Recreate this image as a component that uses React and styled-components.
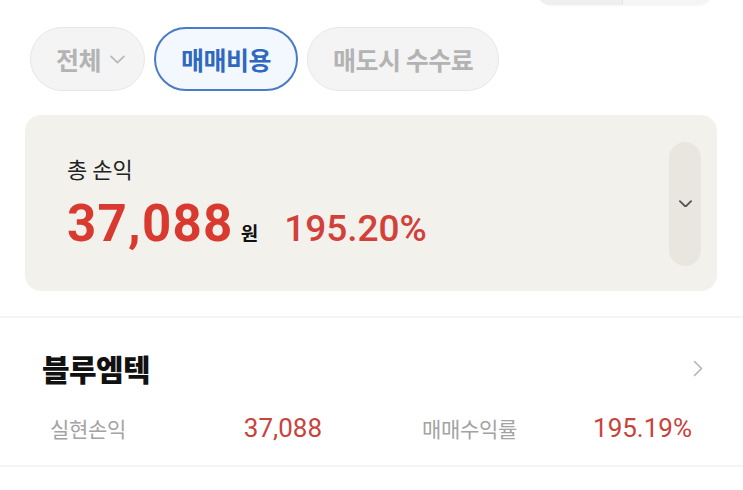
import React from 'react';
import styled, { createGlobalStyle } from 'styled-components';

const GlobalStyle = createGlobalStyle`
  body {
    margin: 0;
    background: #ffffff;
    font-family: Roboto, "Noto Sans CJK KR", sans-serif;
    overflow: hidden;
  }
`;

const Page = styled.div`
  width: 743px;
  height: 490px;
  overflow: hidden;
  background: #fff;
`;

const TopBar = styled.div`
  display: flex;
  justify-content: flex-end;
  padding-right: 31px;
`;

const Segmented = styled.div`
  display: flex;
  width: 175px;
  height: 44px;
  margin-top: -39px;
  border-radius: 14px;
  background: #f3f3f3;
  overflow: hidden;
  box-shadow: 0 1px 2px rgba(0, 0, 0, 0.04);
`;

const Segment = styled.div`
  flex: ${(p) => (p.$wide ? 1.05 : 1)};
  background: ${(p) => (p.$on ? '#efefef' : '#f5f5f5')};
  border-right: ${(p) => (p.$on ? '1px solid #e6e6e6' : 'none')};
`;

const ChipRow = styled.div`
  display: flex;
  gap: 9px;
  padding: 22px 0 0 30px;
`;

const Chip = styled.div`
  display: flex;
  align-items: center;
  gap: 9px;
  height: 64px;
  box-sizing: border-box;
  padding: 0 ${(p) => (p.$withArrow ? '19px' : '25px')} 0 25px;
  border-radius: 32px;
  font-family: "Noto Sans CJK KR", sans-serif;
  font-size: 25px;
  font-weight: 700;
  letter-spacing: -0.5px;
  background: ${(p) => (p.$active ? '#f3f8ff' : '#f4f4f4')};
  border: ${(p) => (p.$active ? '2px solid #4a7bc6' : '1.5px solid #e7e7e7')};
  color: ${(p) => (p.$active ? '#2f68c0' : '#b3b3b3')};
`;

const SummaryCard = styled.div`
  display: flex;
  align-items: center;
  justify-content: space-between;
  margin: 24px 26px 0 25px;
  height: 176px;
  box-sizing: border-box;
  padding: 26px 16px 25px 42px;
  border-radius: 16px;
  background: #f3f1ec;
`;

const SummaryText = styled.div`
  display: flex;
  flex-direction: column;
  gap: 11px;
`;

const SummaryLabel = styled.div`
  font-family: "Noto Sans CJK KR", sans-serif;
  font-size: 22px;
  line-height: 30px;
  color: #222;
`;

const AmountLine = styled.div`
  display: flex;
  align-items: baseline;
  height: 60px;
  line-height: 60px;
`;

const BigAmount = styled.span`
  font-family: Roboto, sans-serif;
  font-size: 51px;
  font-weight: 700;
  letter-spacing: 1.3px;
  color: #d83a30;
`;

const Unit = styled.span`
  margin-left: 7px;
  font-family: "Noto Sans CJK KR", sans-serif;
  font-size: 19px;
  font-weight: 700;
  color: #111;
`;

const Rate = styled.span`
  margin-left: 26px;
  font-family: Roboto, sans-serif;
  font-size: 37px;
  font-weight: 500;
  color: #d2403a;
`;

const ExpandButton = styled.div`
  display: flex;
  align-items: center;
  justify-content: center;
  width: 32px;
  height: 124px;
  border-radius: 16px;
  background: #e9e6df;
  color: #555;
`;

const Divider = styled.div`
  height: 2px;
  background: #f4f4f4;
  margin-top: ${(p) => p.$top || 0}px;
`;

const StockSection = styled.div`
  padding: 30px 40px 19px 42px;
`;

const StockHead = styled.div`
  display: flex;
  align-items: center;
  justify-content: space-between;
  height: 40px;
`;

const StockName = styled.div`
  font-family: "Noto Sans CJK KR", sans-serif;
  font-size: 30px;
  font-weight: 900;
  color: #111;
  letter-spacing: -0.6px;
`;

const StatsGrid = styled.div`
  display: grid;
  grid-template-columns: 272px 270px;
  column-gap: 100px;
  margin-top: 22px;
  padding-left: 8px;
`;

const Stat = styled.div`
  display: flex;
  align-items: center;
  justify-content: space-between;
  height: 36px;
`;

const StatLabel = styled.span`
  font-family: "Noto Sans CJK KR", sans-serif;
  font-size: 21px;
  color: #a3a3a3;
  letter-spacing: -0.3px;
`;

const StatValue = styled.span`
  font-family: Roboto, sans-serif;
  font-size: 26px;
  color: #c8433c;
`;

const ChevronDown = ({ size = 14, color = 'currentColor', width = 2 }) => (
  <svg width={size} height={size * 0.6} viewBox="0 0 14 8" fill="none">
    <path d="M1 1l6 6 6-6" stroke={color} strokeWidth={width} strokeLinecap="round" strokeLinejoin="round" />
  </svg>
);

const ChevronRight = () => (
  <svg width="10" height="17" viewBox="0 0 10 17" fill="none">
    <path d="M1.5 1.5l7 7-7 7" stroke="#b4b4b4" strokeWidth="1.6" strokeLinecap="round" strokeLinejoin="round" />
  </svg>
);

export default function App() {
  return (
    <Page>
      <GlobalStyle />
      <TopBar>
        <Segmented>
          <Segment $on />
          <Segment $wide />
        </Segmented>
      </TopBar>

      <ChipRow>
        <Chip $withArrow>
          전체
          <ChevronDown size={15} color="#b8b8b8" width={1.6} />
        </Chip>
        <Chip $active>매매비용</Chip>
        <Chip>매도시 수수료</Chip>
      </ChipRow>

      <SummaryCard>
        <SummaryText>
          <SummaryLabel>총 손익</SummaryLabel>
          <AmountLine>
            <BigAmount>37,088</BigAmount>
            <Unit>원</Unit>
            <Rate>195.20%</Rate>
          </AmountLine>
        </SummaryText>
        <ExpandButton>
          <ChevronDown size={13} color="#555" width={2} />
        </ExpandButton>
      </SummaryCard>

      <Divider $top={25} />

      <StockSection>
        <StockHead>
          <StockName>블루엠텍</StockName>
          <ChevronRight />
        </StockHead>
        <StatsGrid>
          <Stat>
            <StatLabel>실현손익</StatLabel>
            <StatValue>37,088</StatValue>
          </Stat>
          <Stat>
            <StatLabel>매매수익률</StatLabel>
            <StatValue>195.19%</StatValue>
          </Stat>
        </StatsGrid>
      </StockSection>

      <Divider />
    </Page>
  );
}
